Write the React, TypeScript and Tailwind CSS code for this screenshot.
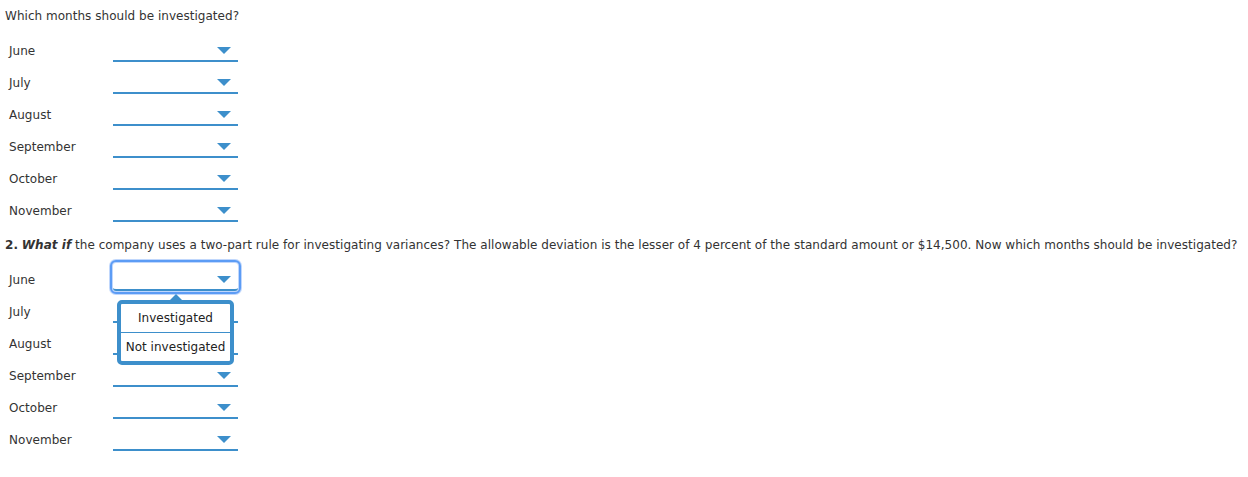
import React from 'react';

const months = ['June', 'July', 'August', 'September', 'October', 'November'];

function Arrow() {
  return (
    <span className="block w-0 h-0 border-l-[7px] border-r-[7px] border-t-[7px] border-l-transparent border-r-transparent border-t-[#3d8fcb]" />
  );
}

// Underlined dropdown like the ones on the quiz page
function Picker({ focused = false, open = false }: { focused?: boolean; open?: boolean }) {
  return (
    <div className="relative">
      <div
        className={
          focused
            ? 'w-[125px] h-[28px] border-b-2 border-[#3d8fcb] flex items-end justify-end pr-[7px] pb-[6px] outline-2 outline-offset-1 outline-[#5c9cf5] rounded-[3px] shadow-[0_0_0_4px_rgba(130,175,250,0.5)]'
            : 'w-[125px] h-[28px] border-b-2 border-[#3d8fcb] flex items-end justify-end pr-[7px] pb-[6px]'
        }
      >
        <Arrow />
      </div>
      {open && (
        <div className="absolute left-[4px] top-[37px] z-10 w-[117px]">
          <span className="absolute left-1/2 -translate-x-1/2 -top-[6px] w-0 h-0 border-l-[6px] border-r-[6px] border-b-[6px] border-l-transparent border-r-transparent border-b-[#3d8fcb]" />
          <div className="border-4 border-[#3d8fcb] rounded-[5px] bg-white text-[12px] text-[#222]">
            <div className="h-[28px] flex items-center justify-center">Investigated</div>
            <div className="h-[29px] flex items-center justify-center border-t border-[#3d8fcb]">Not investigated</div>
          </div>
        </div>
      )}
    </div>
  );
}

function MonthRows({ withOpen = false }: { withOpen?: boolean }) {
  return (
    <div>
      {months.map((m, i) => (
        <div key={m} className="flex h-[32px] items-start pl-[9px]">
          <div className="w-[104px] mt-[9px] leading-[16px]">{m}</div>
          <Picker focused={withOpen && i === 0} open={withOpen && i === 0} />
        </div>
      ))}
    </div>
  );
}

export default function App() {
  return (
    <div className="bg-white min-h-[477px] text-[12px] text-[#333] pl-[5px] pt-[8px] tracking-[0.03px]" style={{ fontFamily: '"DejaVu Sans", Verdana, sans-serif' }}>
      <p className="leading-[16px] mb-[10px]">Which months should be investigated?</p>
      <div className="-ml-[5px]">
        <MonthRows />
      </div>
      <p className="leading-[16px] mt-[11px] mb-[10px]">
        <b>2.</b> <b><i>What if</i></b> the company uses a two-part rule for investigating variances? The allowable deviation is the lesser of 4 percent of the standard amount or $14,500. Now which months should be investigated?
      </p>
      <div className="-ml-[5px]">
        <MonthRows withOpen />
      </div>
    </div>
  );
}
